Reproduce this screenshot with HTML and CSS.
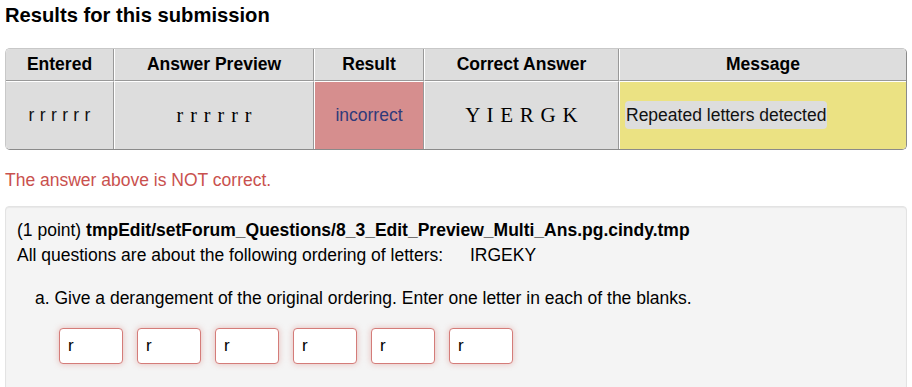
FILE: index.html
```html
<!doctype html>
<html>
    <head>
        <title>Results for this submission</title>
        <link rel="stylesheet" href="styles.css">
    </head>
    <body>
        <h2 class="results-title">Results for this submission</h2>

        <div class="results-wrap">
            <table class="attempt-results">
                <colgroup>
                    <col class="col-entered" />
                    <col class="col-preview" />
                    <col class="col-result" />
                    <col class="col-correct" />
                    <col class="col-message" />
                </colgroup>
                <tr class="head-row">
                    <th>Entered</th>
                    <th>Answer Preview</th>
                    <th>Result</th>
                    <th>Correct Answer</th>
                    <th>Message</th>
                </tr>
                <tr class="body-row">
                    <td class="entered">r r r r r r</td>
                    <td class="math preview">r r r r r r</td>
                    <td class="result-incorrect">incorrect</td>
                    <td class="math correct">Y I E R G K</td>
                    <td class="message"><span class="message-text">Repeated letters detected</span></td>
                </tr>
            </table>
        </div>

        <p class="feedback-error">The answer above is NOT correct.</p>

        <div class="problem">
            <div class="problem-head">
                (1 point) <b>tmpEdit/setForum_Questions/8_3_Edit_Preview_Multi_Ans.pg.cindy.tmp</b>
            </div>
            <div>
                All questions are about the following ordering of letters:
                <span class="letters">IRGEKY</span>
            </div>
            <p class="part">a. Give a derangement of the original ordering. Enter one letter in each of the blanks.</p>
            <div class="blanks">
                <input type="text" class="blank incorrect" value="r" />
                <input type="text" class="blank incorrect" value="r" />
                <input type="text" class="blank incorrect" value="r" />
                <input type="text" class="blank incorrect" value="r" />
                <input type="text" class="blank incorrect" value="r" />
                <input type="text" class="blank incorrect" value="r" />
            </div>
        </div>
    </body>
</html>
```

FILE: styles.css
```css
body {
    font-family: "Liberation Sans", Arial, sans-serif;
    font-size: 17.5px;
    margin: 0;
    padding: 0 5px;
    background: white;
    color: #111;
}
.results-title {
    font-size: 20.2px;
    line-height: 22px;
    margin: 4px 0 22px;
    color: #000;
}
.results-wrap {
    border: 1px solid #c8c8c8;
    border-right-color: #8a8a8a;
    border-bottom-color: #8a8a8a;
    border-radius: 5px;
    overflow: hidden;
    background: white;
}
.attempt-results {
    width: 100%;
    table-layout: fixed;
    border-collapse: separate;
    border-spacing: 0;
}
.col-entered {
    width: 108px;
}
.col-preview {
    width: 200px;
}
.col-result {
    width: 110px;
}
.col-correct {
    width: 195px;
}
.attempt-results th,
.attempt-results td {
    background: #dddddd;
    text-align: center;
    padding: 0 5px;
    border-right: 1px solid #999;
    border-left: 1px solid #fff;
}
.attempt-results th:first-child,
.attempt-results td:first-child {
    border-left: none;
}
.attempt-results th:last-child,
.attempt-results td:last-child {
    border-right: none;
}
.head-row th {
    height: 31px;
    border-bottom: 1px solid #999;
    font-weight: bold;
    color: #000;
}
.body-row td {
    height: 67px;
    border-top: 1px solid #fff;
}
.entered {
    word-spacing: 0.5px;
}
.math {
    font-family: "Liberation Serif", "Times New Roman", serif;
    color: #000;
}
.preview {
    font-size: 20px;
    word-spacing: 2px;
}
.correct {
    font-size: 21px;
    word-spacing: 1.5px;
}
.result-incorrect {
    background: #d68e8e !important;
    color: #2f3a7a;
}
.message {
    background: #ebe283 !important;
    text-align: left !important;
}
.message-text {
    background: #dddddd;
    border-radius: 4px;
    padding: 4px 1px;
}
.feedback-error {
    color: #c9514e;
    margin: 18px 0 14px;
    line-height: 24px;
}
.problem {
    background: #f4f4f4;
    border: 1px solid #e3e3e3;
    border-radius: 4px;
    box-shadow: inset 0 1px 1px rgba(0, 0, 0, 0.05);
    padding: 11px 11px 40px;
    line-height: 25px;
    color: #000;
}
.letters {
    margin-left: 22px;
}
.part {
    margin: 18px 0 0 18px;
}
.blanks {
    display: flex;
    gap: 14px;
    margin: 17px 0 0 42px;
}
.blank {
    width: 64px;
    height: 36px;
    box-sizing: border-box;
    padding: 0 8px;
    font-family: "Liberation Sans", Arial, sans-serif;
    font-size: 17px;
    color: #000;
    background: white;
    border: 1px solid #d47c79;
    border-radius: 4px;
    box-shadow: 0 0 6px rgba(212, 100, 96, 0.4);
}
```
